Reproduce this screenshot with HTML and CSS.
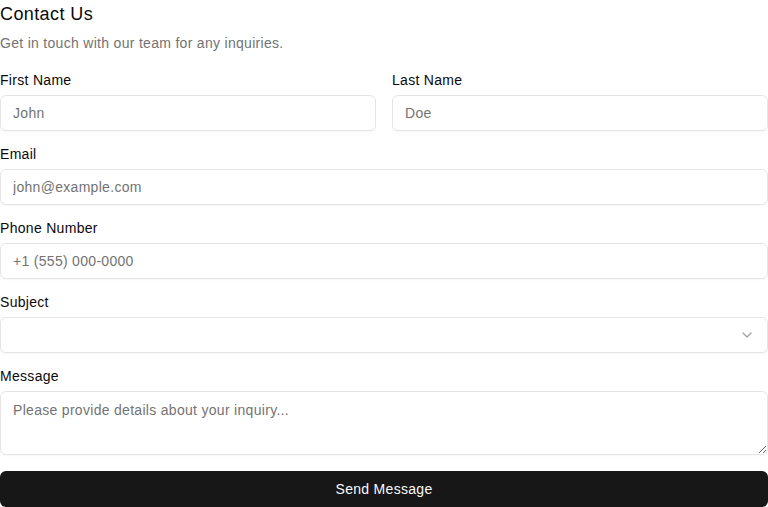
FILE: index.html
```html
<!DOCTYPE html>
<html>
<head>
<meta charset="utf-8">
<link rel="stylesheet" href="styles.css">
</head>
<body>
<form class="form">
  <div class="header">
    <h1 class="title">Contact Us</h1>
    <p class="subtitle">Get in touch with our team for any inquiries.</p>
  </div>
  <div class="row">
    <div class="field">
      <label class="label">First Name</label>
      <input class="input" placeholder="John">
    </div>
    <div class="field">
      <label class="label">Last Name</label>
      <input class="input" placeholder="Doe">
    </div>
  </div>
  <div class="field">
    <label class="label">Email</label>
    <input class="input" placeholder="john@example.com">
  </div>
  <div class="field">
    <label class="label">Phone Number</label>
    <input class="input" placeholder="+1 (555) 000-0000">
  </div>
  <div class="field">
    <label class="label">Subject</label>
    <div class="select">
      <svg class="chevron" width="16" height="16" viewBox="0 0 24 24" fill="none" stroke="currentColor" stroke-width="2" stroke-linecap="round" stroke-linejoin="round"><path d="m6 9 6 6 6-6"/></svg>
    </div>
  </div>
  <div class="field">
    <label class="label">Message</label>
    <textarea class="textarea" placeholder="Please provide details about your inquiry..."></textarea>
  </div>
  <button type="button" class="button">Send Message</button>
</form>
</body>
</html>
```

FILE: styles.css
```css
* { box-sizing: border-box; }
body {
  margin: 0;
  font-family: "Liberation Sans", Arial, sans-serif;
  color: #0a0a0a;
  background: #fff;
}
.form {
  display: flex;
  flex-direction: column;
  gap: 16px;
  width: 768px;
  letter-spacing: 0.3px;
}
.header {
  display: flex;
  flex-direction: column;
  gap: 5px;
  margin-bottom: 4px;
}
.title {
  margin: 0;
  font-size: 18px;
  font-weight: 400;
  line-height: 28px;
  letter-spacing: 0.4px;
}
.subtitle {
  margin: 0;
  font-size: 14px;
  line-height: 20px;
  color: #737373;
}
.row {
  display: grid;
  grid-template-columns: 1fr 1fr;
  gap: 16px;
}
.field {
  display: flex;
  flex-direction: column;
  gap: 8px;
}
.label {
  font-size: 14px;
  line-height: 14px;
  font-weight: 500;
}
.input, .select, .textarea {
  width: 100%;
  height: 36px;
  border: 1px solid #e5e5e5;
  border-radius: 6px;
  padding: 0 12px;
  font-family: inherit;
  font-size: 14px;
  letter-spacing: 0.3px;
  color: #0a0a0a;
  background: #fff;
  box-shadow: 0 1px 2px rgba(0,0,0,0.04);
  outline: none;
}
.input::placeholder, .textarea::placeholder { color: #737373; opacity: 1; }
.select {
  display: flex;
  align-items: center;
  justify-content: flex-end;
  padding-right: 12px;
  color: #a3a3a3;
}
.textarea {
  height: 64px;
  padding: 8px 12px;
  line-height: 20px;
  resize: vertical;
}
.button {
  height: 36px;
  border: none;
  border-radius: 6px;
  background: #171717;
  color: #fafafa;
  font-family: inherit;
  font-size: 14px;
  font-weight: 500;
  letter-spacing: 0.3px;
}
```
